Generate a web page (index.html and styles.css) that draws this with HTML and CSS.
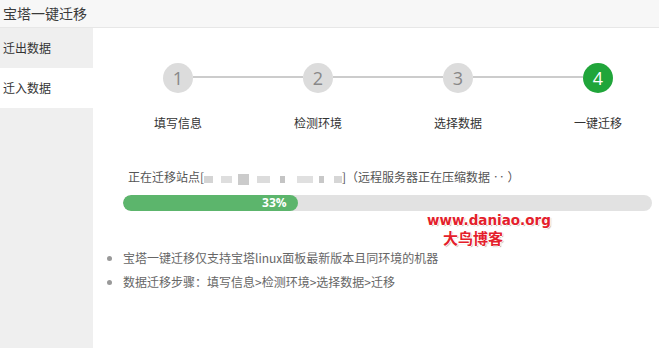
FILE: index.html
```html
<!DOCTYPE html>
<html lang="zh-CN">
<head>
<meta charset="utf-8">
<link rel="stylesheet" href="styles.css">
</head>
<body>
<div class="header">宝塔一键迁移</div>
<div class="main">
  <div class="side">
    <div class="side-item">迁出数据</div>
    <div class="side-item active">迁入数据</div>
  </div>
  <div class="content">
    <div class="steps">
      <div class="circle">1</div><div class="line"></div>
      <div class="circle">2</div><div class="line"></div>
      <div class="circle">3</div><div class="line"></div>
      <div class="circle done">4</div>
    </div>
    <div class="labels">
      <div class="label">填写信息</div>
      <div class="label">检测环境</div>
      <div class="label">选择数据</div>
      <div class="label">一键迁移</div>
    </div>
    <div class="status">正在迁移站点[<span class="blur"><i class="b1"></i><i class="b2"></i><i class="b3"></i><i class="b4"></i><i class="b5"></i><i class="b6"></i><i class="b7"></i><i class="b8"></i></span>]（远程服务器正在压缩数据 ‥ ）</div>
    <div class="bar"><div class="fill" style="width:33%">33%</div></div>
    <ul class="tips">
      <li>宝塔一键迁移仅支持宝塔linux面板最新版本且同环境的机器</li>
      <li>数据迁移步骤：填写信息&gt;检测环境&gt;选择数据&gt;迁移</li>
    </ul>
    <div class="mark">
      <div class="mark-url">www.daniao.org</div>
      <div class="mark-name">大鸟博客</div>
    </div>
  </div>
</div>
</body>
</html>
```
FILE: styles.css
```css
html, body {
  margin: 0;
  padding: 0;
  height: 100%;
  overflow: hidden;
}
body {
  font-family: "Noto Sans CJK SC", "Noto Sans", sans-serif;
  color: #333;
  background: #fff;
  display: flex;
  flex-direction: column;
}
.header {
  height: 27px;
  line-height: 27px;
  border-bottom: 1px solid #e7e7e7;
  background: #f7f7f7;
  padding-left: 3px;
  font-size: 14px;
  color: #3a3a3a;
}
.main {
  flex: 1;
  display: flex;
}
.side {
  width: 93px;
  background: #efefef;
  flex-shrink: 0;
}
.side-item {
  height: 40px;
  line-height: 40px;
  padding-left: 3px;
  font-size: 12px;
  color: #333;
}
.side-item.active {
  background: #fff;
}
.content {
  flex: 1;
  position: relative;
}
.steps {
  display: flex;
  align-items: center;
  margin-top: 35px;
  padding-left: 70px;
}
.circle {
  width: 30px;
  height: 30px;
  border-radius: 50%;
  background: #dcdcdc;
  color: #888;
  font-family: "Open Sans", "Noto Sans", sans-serif;
  font-size: 18px;
  line-height: 30px;
  text-align: center;
  flex-shrink: 0;
}
.circle.done {
  background: #20a53a;
  color: #fff;
}
.line {
  width: 110px;
  height: 2px;
  background: #cccccc;
  margin-top: -2px;
}
.labels {
  display: flex;
  margin-top: 20px;
  padding-left: 15px;
}
.label {
  width: 140px;
  flex-shrink: 0;
  text-align: center;
  font-size: 12px;
  line-height: 20px;
  color: #333;
}
.status {
  margin-top: 34px;
  padding-left: 35px;
  font-size: 12px;
  line-height: 20px;
  color: #555;
  white-space: nowrap;
}
.blur {
  display: inline-flex;
  align-items: center;
  width: 138px;
  height: 12px;
  vertical-align: -1px;
}
.blur i {
  display: block;
  height: 7px;
  background: #d4d4d4;
}
.blur .b1 { width: 10px; margin-right: 8px; }
.blur .b2 { width: 14px; margin-right: 6px; background: #dedede; }
.blur .b3 { width: 12px; height: 11px; margin-right: 8px; background: #cbcbcb; }
.blur .b4 { width: 16px; margin-right: 10px; background: #dcdcdc; }
.blur .b5 { width: 6px; margin-right: 12px; background: #c4c4c4; }
.blur .b6 { width: 18px; margin-right: 6px; background: #e0e0e0; }
.blur .b7 { width: 6px; margin-right: 10px; background: #c8c8c8; }
.blur .b8 { width: 10px; background: #d6d6d6; }
.bar {
  margin-top: 8px;
  margin-left: 30px;
  width: 529px;
  height: 16px;
  border-radius: 8px;
  background: #e2e2e2;
  overflow: hidden;
}
.fill {
  height: 16px;
  border-radius: 8px;
  background: #5cb56c;
  color: #fff;
  font-family: "Open Sans", "Noto Sans", sans-serif;
  font-weight: 700;
  font-size: 12px;
  line-height: 16px;
  text-align: right;
  padding-right: 11px;
  box-sizing: border-box;
}
.tips {
  margin: 35px 0 0 0;
  padding-left: 30px;
  font-size: 12px;
  line-height: 24px;
  color: #666;
}
.tips li::marker {
  color: #999;
}
.mark {
  position: absolute;
  left: 334px;
  top: 183px;
  color: #e4202b;
  font-weight: 700;
  text-shadow: 1px 0 0 #fff, -1px 0 0 #fff, 0 1px 0 #fff, 0 -1px 0 #fff, 1px 1px 1px #999;
}
.mark-url {
  font-family: "DejaVu Sans", sans-serif;
  font-size: 13.5px;
  line-height: 18px;
}
.mark-name {
  font-family: "Noto Sans CJK SC", sans-serif;
  font-size: 15px;
  line-height: 18px;
  padding-left: 16px;
}
```
